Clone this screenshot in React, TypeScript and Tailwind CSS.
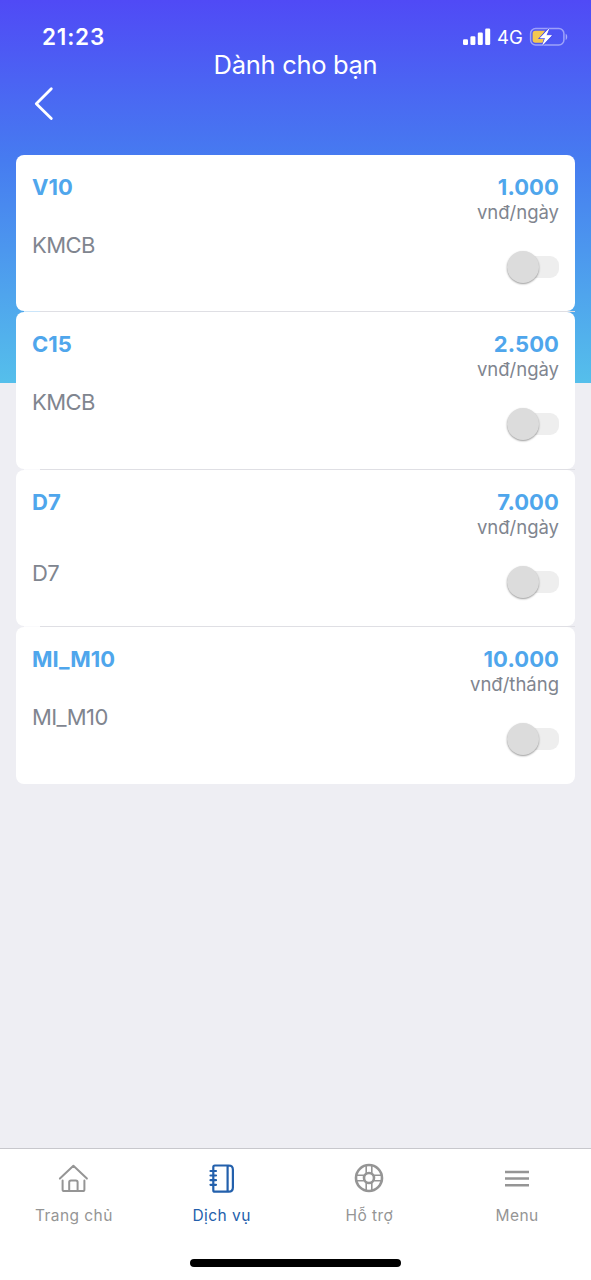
import React, { useState } from "react";

type Plan = { name: string; desc: string; price: string; unit: string; descClass: string };

const plans: Plan[] = [
  { name: "V10", desc: "KMCB", price: "1.000", unit: "vnđ/ngày", descClass: "mt-[30.5px] tracking-[-0.6px]" },
  { name: "C15", desc: "KMCB", price: "2.500", unit: "vnđ/ngày", descClass: "mt-[30px] tracking-[-0.6px]" },
  { name: "D7", desc: "D7", price: "7.000", unit: "vnđ/ngày", descClass: "mt-[43px] tracking-[-0.6px]" },
  { name: "MI_M10", desc: "MI_M10", price: "10.000", unit: "vnđ/tháng", descClass: "mt-[30px] tracking-[-0.6px]" },
];

function StatusBar() {
  return (
    <div className="flex h-[50px] items-start justify-between pt-[23px] pr-[22px] pl-[42px]">
      <span className="text-[22.5px] leading-[27px] font-semibold tracking-[0.8px]">21:23</span>
      <div className="flex h-[27px] items-center">
        <svg width="28" height="18" viewBox="0 0 28 18" fill="currentColor">
          <rect x="0" y="11.2" width="5" height="5.8" rx="1.2" />
          <rect x="7.4" y="8.2" width="5" height="8.8" rx="1.2" />
          <rect x="14.8" y="4.5" width="5" height="12.5" rx="1.2" />
          <rect x="22.2" y="0.5" width="5" height="16.5" rx="1.2" />
        </svg>
        <span className="ml-[6px] w-[27px] pt-px text-[18.5px] leading-[27px]">4G</span>
        <svg className="ml-[5px]" width="40" height="20" viewBox="0 0 40 20">
          <rect x="1.6" y="1.5" width="33.3" height="16.5" rx="5" fill="none" stroke="#fff" strokeOpacity=".45" strokeWidth="1.5" />
          <path d="M36.7 6.7c2 .8 2 5.3 0 6.2z" fill="#fff" fillOpacity=".5" />
          <path d="M6.3 3.8H16L11.2 11h4.1l-1.5 4.7H6.3A2.7 2.7 0 0 1 3.6 13V6.5a2.7 2.7 0 0 1 2.7-2.7z" fill="#f3c750" />
          <path d="M19.8 2 11.2 11h5.2l-2.7 6.8 8.8-9.4h-5.4z" fill="#fff" stroke="#4c50ee" strokeWidth="2" paintOrder="stroke" />
          <path d="M19.8 2 11.2 11h5.2l-2.7 6.8 8.8-9.4h-5.4z" fill="#fff" stroke="#fff" strokeWidth=".5" />
        </svg>
      </div>
    </div>
  );
}

function Toggle() {
  const [on, setOn] = useState(false);
  return (
    <button
      type="button"
      role="switch"
      aria-checked={on}
      onClick={() => setOn(!on)}
      className="flex h-8 w-[52px] items-center"
    >
      <span className={on ? "order-2 -ml-4 size-8 rounded-full bg-[#4fa6ec]" : "z-10 size-8 shrink-0 rounded-full bg-[#dcdcdc] shadow-[0_1px_2px_rgba(0,0,0,0.4)]"} />
      <span className={on ? "h-[22px] w-9 rounded-full bg-[#cfe6fb]" : "-ml-4 h-[22px] w-9 rounded-[9px] bg-[#eeeeee]"} />
    </button>
  );
}

function PlanCard({ plan, divided }: { plan: Plan; divided: boolean }) {
  return (
    <div className="flex h-[157.5px] flex-col">
      <article className="flex h-[156.5px] justify-between rounded-[8px] bg-white px-4 pt-[18px]">
        <div>
          <h2 className="text-[22px] leading-[28px] font-bold text-[#4fa6ec]">{plan.name}</h2>
          <p className={`text-[22px] leading-[28px] text-[#80858f] ${plan.descClass}`}>{plan.desc}</p>
        </div>
        <div className="flex flex-col items-end">
          <span className="text-[22px] leading-[28px] font-bold tracking-[0.1px] text-[#4fa6ec]">{plan.price}</span>
          <span className="-mt-px text-[18.5px] leading-[24px] text-[#80858f]">{plan.unit}</span>
          <div className="mt-[27px]"><Toggle /></div>
        </div>
      </article>
      {divided && (
        <div className="flex h-px">
          <div className="w-2" />
          <div className="w-4 bg-white/70" />
          <div className="flex-1 bg-[#dfdfe4]" />
        </div>
      )}
    </div>
  );
}

function HomeIcon() {
  return (
    <svg width="32" height="32" viewBox="0 0 32 32" fill="none" stroke="currentColor" strokeWidth="2" strokeLinecap="round" strokeLinejoin="round">
      <path d="M1.9 15.6 15.4 2.8 28.9 15.6M4.6 17.4v9q0 1.7 1.7 1.7h18.4q1.7 0 1.7-1.7v-9M11.2 28v-8.8q0-1.8 1.8-1.8h4.8q1.8 0 1.8 1.8V28" />
    </svg>
  );
}

function NotebookIcon() {
  return (
    <svg width="32" height="32" viewBox="0 0 32 32" fill="none" stroke="currentColor" strokeWidth="2.2" strokeLinecap="round" strokeLinejoin="round">
      <path d="M7.3 4q0-1.5 1.5-1.5h13.9q4.2 0 4.2 4.2v17.8q0 4.2-4.2 4.2H8.8q-1.5 0-1.5-1.5zM21.6 2.5v26M4.5 8h5.5M4.5 12.5h5.5M4.5 17.2h5.5M4.5 21.8h5.5" />
    </svg>
  );
}

function SupportIcon() {
  return (
    <svg width="32" height="32" viewBox="0 0 32 32" fill="none" stroke="currentColor">
      <circle cx="16" cy="15" r="13" strokeWidth="2.6" />
      <circle cx="16" cy="15" r="5" strokeWidth="2.6" />
      <path strokeWidth="1.6" d="M13.2 3v7.8M18.8 3v7.8M13.2 19.2V27M18.8 19.2V27M4 12.2h7.8M4 17.8h7.8M20.2 12.2H28M20.2 17.8H28" />
    </svg>
  );
}

function MenuIcon() {
  return (
    <svg width="32" height="32" viewBox="0 0 32 32" stroke="currentColor" strokeWidth="2.4">
      <path d="M4 9h24M4 15.5h24M4 22.2h24" />
    </svg>
  );
}

const tabs = [
  { label: "Trang chủ", icon: <HomeIcon />, active: false },
  { label: "Dịch vụ", icon: <NotebookIcon />, active: true },
  { label: "Hỗ trợ", icon: <SupportIcon />, active: false },
  { label: "Menu", icon: <MenuIcon />, active: false },
];

export default function App() {
  return (
    <div className="flex h-[1280px] w-[591px] flex-col overflow-hidden bg-[#eeeef3] font-['Inter',sans-serif]">
      <main className="flex-1 bg-[linear-gradient(to_bottom,#504af6,#467cf0_42%,#55bfeb)] bg-[length:100%_383px] bg-no-repeat">
        <header className="h-[154.5px] text-white">
          <StatusBar />
          <h1 className="text-center text-[25.5px] leading-[30px] font-normal tracking-[-0.3px]">Dành cho bạn</h1>
          <button type="button" aria-label="Back" className="mt-[4px] ml-[32px] block">
            <svg width="24" height="38" viewBox="0 0 24 38" fill="none" stroke="currentColor" strokeWidth="2.8" strokeLinecap="round" strokeLinejoin="round">
              <path d="M19.3 4.7 4.3 19.7l15 14.8" />
            </svg>
          </button>
        </header>
        <section className="px-4">
          {plans.map((p, i) => (
            <PlanCard key={p.name} plan={p} divided={i < plans.length - 1} />
          ))}
        </section>
      </main>
      <footer className="h-[132px] border-t border-[#c7c7cc] bg-white">
        <nav className="grid h-[110px] grid-cols-4">
          {tabs.map((t) => (
            <a key={t.label} className={`flex flex-col items-center pt-[14px] ${t.active ? "text-[#2360ac]" : "text-[#959595]"}`}>
              {t.icon}
              <span className="mt-[11px] text-[15.5px] leading-[20px] font-normal tracking-[0.45px]">{t.label}</span>
            </a>
          ))}
        </nav>
        <div className="mx-auto h-2 w-[211px] rounded-full bg-black" />
      </footer>
    </div>
  );
}
